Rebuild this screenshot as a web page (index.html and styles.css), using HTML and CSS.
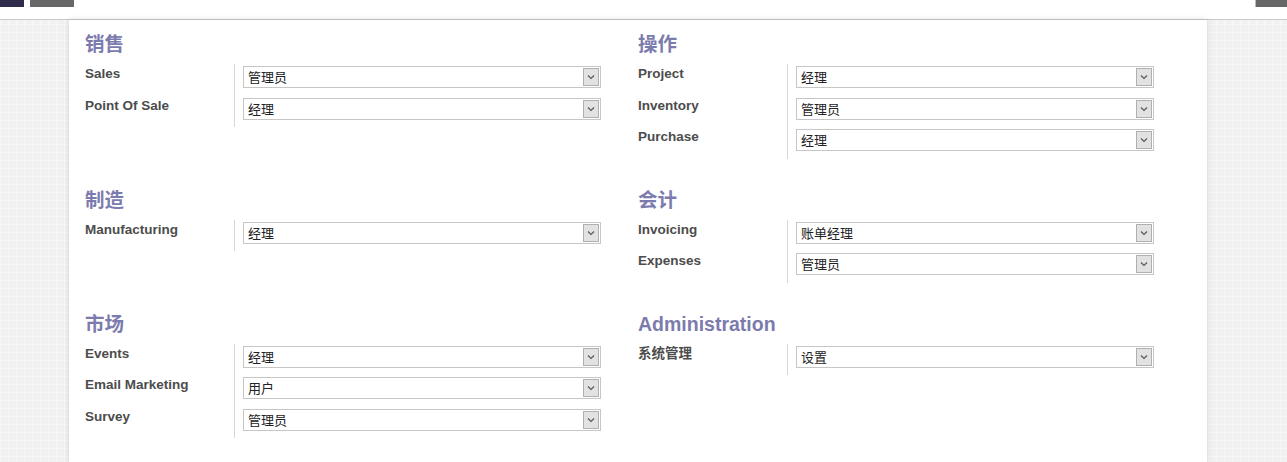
FILE: index.html
```html
<!DOCTYPE html>
<html lang="zh">
<head>
<meta charset="utf-8">
<title>Access Rights</title>
<link rel="stylesheet" href="styles.css">
</head>
<body>
<header class="topbar">
  <div class="tb-btn tb-dark"></div>
  <div class="tb-btn tb-gray"></div>
  <div class="tb-spacer"></div>
  <div class="tb-btn tb-gray tb-right"></div>
</header>
<main class="view">
  <div class="sheet">
    <div class="groups">

      <section class="group">
        <h2 class="group-title">销售</h2>
        <div class="fields">
          <div class="label">Sales</div>
          <div class="value"><div class="select"><span class="sel-text">管理员</span><span class="sel-arrow"><svg viewBox="0 0 10 10" width="10" height="10"><path d="M2 3.5 L5 6.5 L8 3.5" fill="none" stroke="#555" stroke-width="1.1"/></svg></span></div></div>
          <div class="label">Point Of Sale</div>
          <div class="value"><div class="select"><span class="sel-text">经理</span><span class="sel-arrow"><svg viewBox="0 0 10 10" width="10" height="10"><path d="M2 3.5 L5 6.5 L8 3.5" fill="none" stroke="#555" stroke-width="1.1"/></svg></span></div></div>
        </div>
      </section>

      <section class="group">
        <h2 class="group-title">操作</h2>
        <div class="fields">
          <div class="label">Project</div>
          <div class="value"><div class="select"><span class="sel-text">经理</span><span class="sel-arrow"><svg viewBox="0 0 10 10" width="10" height="10"><path d="M2 3.5 L5 6.5 L8 3.5" fill="none" stroke="#555" stroke-width="1.1"/></svg></span></div></div>
          <div class="label">Inventory</div>
          <div class="value"><div class="select"><span class="sel-text">管理员</span><span class="sel-arrow"><svg viewBox="0 0 10 10" width="10" height="10"><path d="M2 3.5 L5 6.5 L8 3.5" fill="none" stroke="#555" stroke-width="1.1"/></svg></span></div></div>
          <div class="label">Purchase</div>
          <div class="value"><div class="select"><span class="sel-text">经理</span><span class="sel-arrow"><svg viewBox="0 0 10 10" width="10" height="10"><path d="M2 3.5 L5 6.5 L8 3.5" fill="none" stroke="#555" stroke-width="1.1"/></svg></span></div></div>
        </div>
      </section>

      <section class="group">
        <h2 class="group-title">制造</h2>
        <div class="fields">
          <div class="label">Manufacturing</div>
          <div class="value"><div class="select"><span class="sel-text">经理</span><span class="sel-arrow"><svg viewBox="0 0 10 10" width="10" height="10"><path d="M2 3.5 L5 6.5 L8 3.5" fill="none" stroke="#555" stroke-width="1.1"/></svg></span></div></div>
        </div>
      </section>

      <section class="group">
        <h2 class="group-title">会计</h2>
        <div class="fields">
          <div class="label">Invoicing</div>
          <div class="value"><div class="select"><span class="sel-text">账单经理</span><span class="sel-arrow"><svg viewBox="0 0 10 10" width="10" height="10"><path d="M2 3.5 L5 6.5 L8 3.5" fill="none" stroke="#555" stroke-width="1.1"/></svg></span></div></div>
          <div class="label">Expenses</div>
          <div class="value"><div class="select"><span class="sel-text">管理员</span><span class="sel-arrow"><svg viewBox="0 0 10 10" width="10" height="10"><path d="M2 3.5 L5 6.5 L8 3.5" fill="none" stroke="#555" stroke-width="1.1"/></svg></span></div></div>
        </div>
      </section>

      <section class="group">
        <h2 class="group-title">市场</h2>
        <div class="fields">
          <div class="label">Events</div>
          <div class="value"><div class="select"><span class="sel-text">经理</span><span class="sel-arrow"><svg viewBox="0 0 10 10" width="10" height="10"><path d="M2 3.5 L5 6.5 L8 3.5" fill="none" stroke="#555" stroke-width="1.1"/></svg></span></div></div>
          <div class="label">Email Marketing</div>
          <div class="value"><div class="select"><span class="sel-text">用户</span><span class="sel-arrow"><svg viewBox="0 0 10 10" width="10" height="10"><path d="M2 3.5 L5 6.5 L8 3.5" fill="none" stroke="#555" stroke-width="1.1"/></svg></span></div></div>
          <div class="label">Survey</div>
          <div class="value"><div class="select"><span class="sel-text">管理员</span><span class="sel-arrow"><svg viewBox="0 0 10 10" width="10" height="10"><path d="M2 3.5 L5 6.5 L8 3.5" fill="none" stroke="#555" stroke-width="1.1"/></svg></span></div></div>
        </div>
      </section>

      <section class="group">
        <h2 class="group-title">Administration</h2>
        <div class="fields">
          <div class="label">系统管理</div>
          <div class="value"><div class="select"><span class="sel-text">设置</span><span class="sel-arrow"><svg viewBox="0 0 10 10" width="10" height="10"><path d="M2 3.5 L5 6.5 L8 3.5" fill="none" stroke="#555" stroke-width="1.1"/></svg></span></div></div>
        </div>
      </section>

    </div>
  </div>
</main>
</body>
</html>
```

FILE: styles.css
```css
html, body {
  margin: 0;
  padding: 0;
  height: 100%;
}

body {
  font-family: "Liberation Sans", Arial, "Noto Sans CJK SC", sans-serif;
  font-size: 13px;
  color: #4c4c4c;
  background-color: #f1f1f1;
  background-image:
    linear-gradient(90deg, rgba(255,255,255,0.4) 1px, transparent 1px),
    linear-gradient(rgba(255,255,255,0.4) 1px, transparent 1px);
  background-size: 8px 8px;
  overflow: hidden;
}

.topbar {
  display: flex;
  align-items: flex-start;
  height: 19px;
  background: #ffffff;
  border-bottom: 1px solid #c8c8c8;
}

.tb-btn {
  height: 7px;
}

.tb-dark {
  width: 24px;
  background: #2e2b4b;
}

.tb-gray {
  width: 44px;
  margin-left: 6px;
  background: #676767;
}

.tb-spacer {
  flex: 1;
}

.tb-right {
  width: 31px;
  margin-left: 0;
  border-left: 1px solid #bbbbbb;
}

.view {
  display: flex;
  height: calc(100% - 20px);
}

.sheet {
  margin-left: 69px;
  width: 1138px;
  box-sizing: border-box;
  padding: 13px 16px 0 16px;
  background: #ffffff;
  box-shadow: 0 0 6px rgba(0, 0, 0, 0.14);
}

.groups {
  display: grid;
  grid-template-columns: 553px 553px;
  row-gap: 30px;
  align-items: start;
}

.group-title {
  margin: 0 0 9px 0;
  font-size: 19.5px;
  line-height: 22px;
  font-weight: bold;
  color: #7c7bad;
  font-family: "Liberation Sans", Arial, "Noto Sans CJK SC", sans-serif;
}

.fields {
  display: grid;
  grid-template-columns: 150px 366px;
  grid-auto-rows: 31.5px;
}

.label {
  border-right: 1px solid #d6d6d6;
  font-size: 13.5px;
  line-height: 20px;
  font-weight: bold;
  color: #4c4c4c;
}

.value {
  padding-left: 8px;
  padding-top: 2px;
}

.select {
  display: flex;
  align-items: stretch;
  box-sizing: border-box;
  width: 358px;
  height: 22px;
  border: 1px solid #c6c6c6;
  background: #ffffff;
  font-family: "Noto Sans CJK SC", "Liberation Sans", sans-serif;
  font-size: 13px;
  color: #222222;
}

.sel-text {
  flex: 1;
  padding-left: 4px;
  line-height: 20px;
}

.sel-arrow {
  display: flex;
  align-items: center;
  justify-content: center;
  width: 16px;
  margin: 1px 1px 1px 0;
  background: #e2e2e2;
  border: 1px solid #b0b0b0;
  box-sizing: border-box;
}
```
